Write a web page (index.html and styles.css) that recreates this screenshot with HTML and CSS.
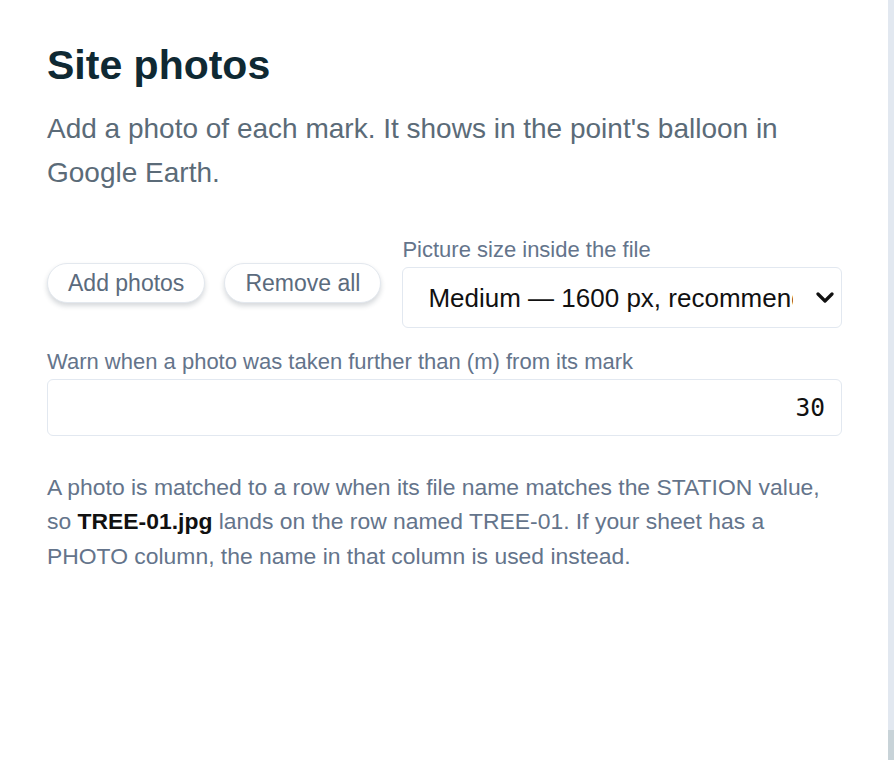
FILE: index.html
```html
<!DOCTYPE html>
<html lang="en">
<head>
<meta charset="utf-8">
<title>Site photos</title>
<link rel="stylesheet" href="styles.css">
</head>
<body>
<div class="page">
  <main class="panel">
    <h1 class="title">Site photos</h1>
    <p class="lead">Add a photo of each mark. It shows in the point's balloon in Google Earth.</p>
    <div class="controls">
      <div class="buttons">
        <button class="pill" type="button">Add photos</button>
        <button class="pill" type="button">Remove all</button>
      </div>
      <label class="field field-size">
        <span class="field-label">Picture size inside the file</span>
        <span class="select-wrap">
          <select class="select">
            <option>Medium — 1600 px, recommended</option>
            <option>Small — 800 px</option>
            <option>Large — 2400 px</option>
          </select>
          <svg class="chevron" width="18" height="11" viewBox="0 0 18 11" aria-hidden="true">
            <path d="M2 2 L9 9 L16 2" fill="none" stroke="#111111" stroke-width="3.2" stroke-linecap="round" stroke-linejoin="round"/>
          </svg>
        </span>
      </label>
    </div>
    <label class="field field-warn">
      <span class="field-label">Warn when a photo was taken further than (m) from its mark</span>
      <input class="num" type="text" value="30">
    </label>
    <p class="note">A photo is matched to a row when its file name matches the STATION value, so <strong>TREE-01.jpg</strong> lands on the row named TREE-01. If your sheet has a PHOTO column, the name in that column is used instead.</p>
  </main>
  <div class="rail"><div class="rail-thumb"></div></div>
</div>
</body>
</html>
```

FILE: styles.css
```css
* { box-sizing: border-box; }
html, body { margin: 0; padding: 0; background: #ffffff; }
body { font-family: "Liberation Sans", Arial, sans-serif; }

.page {
  display: flex;
  min-height: 100vh;
}

.panel {
  flex: 1;
  padding: 41px 46px 0 47px;
}

.rail {
  width: 6px;
  background: #e2e8f0;
  display: flex;
  flex-direction: column;
  justify-content: flex-end;
}
.rail-thumb {
  height: 30px;
  background: #c8d3d8;
}

.title {
  margin: 0;
  font-size: 41px;
  line-height: 48px;
  font-weight: 700;
  color: #0f2933;
}

.lead {
  margin: 18px 0 0;
  font-size: 28px;
  line-height: 44px;
  color: #5b6b78;
}

.controls {
  margin-top: 42px;
  display: flex;
  align-items: center;
  gap: 21px;
}

.buttons {
  display: flex;
  gap: 19px;
}

.pill {
  font-family: "Liberation Sans", Arial, sans-serif;
  font-size: 23px;
  line-height: 26px;
  color: #5b6b7d;
  background: #ffffff;
  border: 1px solid #e3e8ee;
  border-radius: 999px;
  padding: 6px 20px;
  box-shadow: 0 3px 5px rgba(30, 45, 60, 0.18);
}

.field {
  display: flex;
  flex-direction: column;
  gap: 5px;
}
.field-size { flex: 1; }

.field-label {
  font-size: 22px;
  line-height: 25px;
  color: #64748b;
}

.select-wrap {
  position: relative;
  display: block;
}

.select {
  display: block;
  -webkit-appearance: none;
  appearance: none;
  height: 61px;
  width: 100%;
  font-family: "Liberation Sans", Arial, sans-serif;
  font-size: 26px;
  color: #111111;
  background: #ffffff;
  border: 1px solid #e2e8f0;
  border-radius: 6px;
  padding: 0 48px 0 25px;
}

.chevron {
  position: absolute;
  right: 8px;
  top: 25px;
}

.field-warn { margin-top: 21px; }

.num {
  display: block;
  height: 57px;
  width: 100%;
  font-family: "DejaVu Sans Mono", monospace;
  font-size: 24.5px;
  color: #111111;
  text-align: right;
  background: #ffffff;
  border: 1px solid #e2e8f0;
  border-radius: 6px;
  padding: 0 16px;
}

.note {
  margin: 34px 0 0;
  font-size: 22.9px;
  line-height: 34.3px;
  color: #64748b;
}
.note strong {
  color: #111111;
  font-weight: 700;
}
```
